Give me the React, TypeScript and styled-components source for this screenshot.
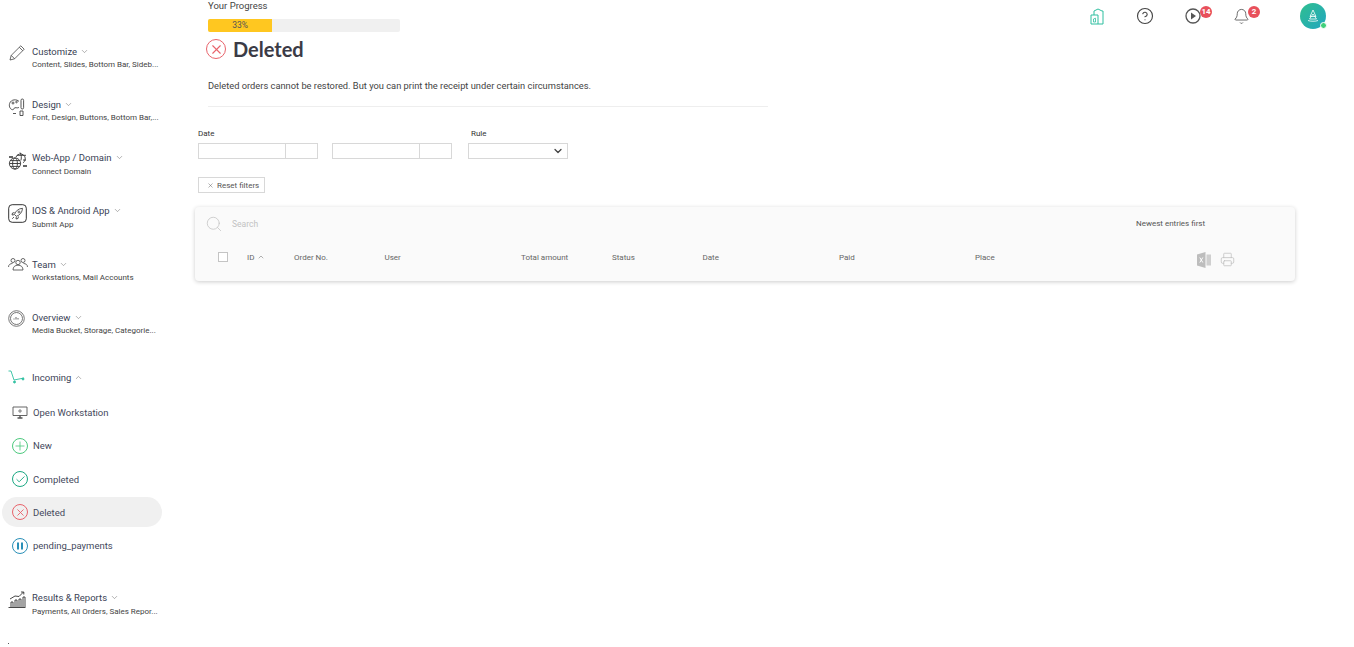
import React from 'react';
import styled, { createGlobalStyle } from 'styled-components';
import { ChevronDown, ChevronUp, Search, Printer, X, Bell, CircleHelp, Plus, Check } from 'lucide-react';

const GlobalStyle = createGlobalStyle`
    html, body {
        margin: 0;
        padding: 0;
        background: #fff;
        font-family: Roboto, "Liberation Sans", sans-serif;
        color: #333;
    }
`;

const Page = styled.div`
    display: flex;
    width: 1354px;
    height: 647px;
    overflow: hidden;
`;

const Sidebar = styled.nav`
    width: 190px;
    flex-shrink: 0;
    padding-top: 44px;
    box-sizing: border-box;
`;

const Group = styled.div<{ $height?: number }>`
    display: flex;
    align-items: flex-start;
    height: ${({ $height }) => $height ?? 53.3}px;
    padding-left: 8px;
    box-sizing: border-box;
`;

const GroupIcon = styled.div`
    width: 24px;
    height: 24px;
    flex-shrink: 0;
    color: #444;
    svg { display: block; }
`;

const GroupText = styled.div`
    min-width: 0;
`;

const GroupTitle = styled.div`
    display: flex;
    align-items: center;
    gap: 3px;
    height: 14px;
    font-size: 9.5px;
    color: #3a3f55;
    svg { color: #777; }
`;

const GroupSub = styled.div`
    font-size: 8px;
    line-height: 13px;
    color: #444;
    white-space: nowrap;
`;

const SubList = styled.div`
    display: flex;
    flex-direction: column;
    margin: 7px 0 27px 2px;
    width: 160px;
`;

const SubItem = styled.div<{ $active?: boolean }>`
    display: flex;
    align-items: center;
    height: 30px;
    margin-bottom: 3.3px;
    padding-left: 10px;
    gap: 5px;
    border-radius: 15px;
    background: ${({ $active }) => ($active ? '#f0f0f0' : 'transparent')};
    font-size: 9.5px;
    color: #44495c;
`;

const RingIcon = styled.span<{ $color: string; $size?: number }>`
    display: flex;
    align-items: center;
    justify-content: center;
    width: ${({ $size }) => $size ?? 16}px;
    height: ${({ $size }) => $size ?? 16}px;
    box-sizing: border-box;
    border: 1.7px solid ${({ $color }) => $color};
    border-radius: 50%;
    color: ${({ $color }) => $color};
    flex-shrink: 0;
`;

const Main = styled.main`
    flex: 1;
    min-width: 0;
    position: relative;
`;

const TopIcons = styled.div`
    position: absolute;
    top: 3px;
    left: 900px;
    display: flex;
    align-items: center;
    height: 26px;
`;

const TopIcon = styled.div<{ $width: number }>`
    position: relative;
    width: ${({ $width }) => $width}px;
    color: #444;
    svg { display: block; }
`;

const Badge = styled.span`
    position: absolute;
    top: -2px;
    left: 15px;
    min-width: 12px;
    height: 12px;
    padding: 0 1px;
    box-sizing: border-box;
    border-radius: 6px;
    background: #e8505b;
    color: #fff;
    font-size: 8px;
    font-weight: 700;
    line-height: 12px;
    text-align: center;
`;

const Avatar = styled.div`
    position: relative;
    width: 26px;
    height: 26px;
    border-radius: 50%;
    background: linear-gradient(135deg, #2fbf8f, #22a6c0);
    display: flex;
    align-items: center;
    justify-content: center;
`;

const OnlineDot = styled.span`
    position: absolute;
    right: -1px;
    bottom: 0;
    width: 5px;
    height: 5px;
    border-radius: 50%;
    border: 1px solid #fff;
    background: #3fd07a;
`;

const Progress = styled.div`
    padding: 0 0 0 18px;
    width: 192px;
`;

const ProgressLabel = styled.div`
    font-size: 9.5px;
    line-height: 12px;
    color: #444;
`;

const ProgressTrack = styled.div`
    height: 13px;
    margin-top: 7px;
    background: #f0f0f0;
    border-radius: 2px;
    overflow: hidden;
`;

const ProgressBar = styled.div`
    width: 33.4%;
    height: 100%;
    background: #ffc720;
    color: #555;
    font-size: 8.5px;
    line-height: 13px;
    text-align: center;
`;

const Title = styled.h1`
    display: flex;
    align-items: center;
    gap: 7px;
    margin: 2px 0 0 16px;
    height: 30px;
    font-family: Lato, sans-serif;
    font-size: 20px;
    font-weight: 700;
    color: #3b3b46;
`;

const Intro = styled.div`
    width: 560px;
    margin: 0 0 0 18px;
    padding: 15px 0 14px;
    border-bottom: 1px solid #eee;
    font-size: 9.3px;
    line-height: 13px;
    color: #444;
`;

const Filters = styled.div`
    display: flex;
    align-items: flex-end;
    margin: 21px 0 0 8px;
    gap: 14px;
`;

const Field = styled.div`
    display: flex;
    flex-direction: column;
`;

const FieldLabel = styled.label`
    height: 15px;
    padding-top: 1px;
    box-sizing: border-box;
    font-size: 8px;
    line-height: 10px;
    color: #333;
`;

const DateBox = styled.div`
    display: flex;
    width: 120px;
    height: 16px;
    box-sizing: border-box;
    border: 1px solid #d8d8d8;
`;

const DatePart = styled.div`
    width: 86px;
    border-right: 1px solid #d8d8d8;
`;

const RuleField = styled(Field)`
    margin-left: 2px;
`;

const RuleLabel = styled(FieldLabel)`
    padding-left: 3px;
`;

const Select = styled.div`
    display: flex;
    align-items: center;
    justify-content: flex-end;
    width: 100px;
    height: 16px;
    padding-right: 3px;
    box-sizing: border-box;
    border: 1px solid #d8d8d8;
    color: #444;
`;

const ResetButton = styled.button`
    display: flex;
    align-items: center;
    gap: 3px;
    width: 67px;
    height: 16px;
    margin: 18px 0 0 8px;
    padding: 0 0 0 8px;
    box-sizing: border-box;
    background: #fff;
    border: 1px solid #d8d8d8;
    font-family: inherit;
    font-size: 8px;
    color: #555;
    white-space: nowrap;
`;

const Card = styled.section`
    width: 1100px;
    height: 74px;
    margin: 14px 0 0 5px;
    background: #fafafa;
    border-radius: 4px;
    box-shadow: 0 1px 4px rgba(0, 0, 0, 0.2);
`;

const SearchRow = styled.div`
    display: flex;
    align-items: center;
    height: 33px;
    padding-left: 10px;
    font-size: 8.5px;
    color: #c2c2c2;
`;

const SearchText = styled.span`
    margin-left: 9px;
    flex: 1;
`;

const SortText = styled.span`
    width: 159px;
    color: #555;
    font-size: 8px;
`;

const HeaderRow = styled.div`
    display: grid;
    grid-template-columns: 29px 47px 90.5px 136.5px 91px 90.5px 136.5px 136px 222px 1fr;
    align-items: center;
    height: 34px;
    padding-left: 23px;
    font-size: 8px;
    color: #666;
`;

const Checkbox = styled.span`
    width: 8px;
    height: 8px;
    border: 1px solid #c4c4c4;
    background: #fff;
`;

const HeaderCell = styled.span`
    display: flex;
    align-items: center;
    gap: 3px;
`;

const ExportIcons = styled.div`
    display: flex;
    align-items: center;
    gap: 9px;
    margin-top: 5px;
    color: #bdbdbd;
`;

const ClippedMark = styled.div`
    width: 1px;
    height: 1px;
    margin: -1px 0 0 8px;
    background: #555;
`;

const ChevronD = () => <ChevronDown size={9} strokeWidth={1.5} />;

const PencilIcon = () => (
    <svg width="18" height="18" viewBox="0 0 18 18" fill="none" stroke="#444" strokeWidth="0.8">
        <path d="M2 16l1.2-4.6L12.800 1.800l3.400 3.400-9.600 9.600z" />
        <path d="M3.200 11.400l3.400 3.400M11.300 3.300l3.400 3.400" />
    </svg>
);

const PaletteIcon = () => (
    <svg width="18" height="20" viewBox="0 0 18 20" fill="none" stroke="#444" strokeWidth="0.9">
        <path d="M11 4.500C9 2 3 2 1.600 6.500c-1 3.400 1 6 3 6.200 1.500.1 1-1.800 2.400-2 1.500-.2 3 .8 4-.5" />
        <circle cx="5" cy="6" r="1" />
        <circle cx="8.500" cy="5" r="0.8" />
        <rect x="13" y="2" width="2.600" height="10" rx="1.300" />
        <path d="M5 16.500h3M12 14h3v4.500h-3z" />
    </svg>
);

const GlobeIcon = () => (
    <svg width="20" height="20" viewBox="0 0 20 20" fill="none" stroke="#333" strokeWidth="0.9">
        <circle cx="7" cy="12.500" r="5.600" />
        <ellipse cx="7" cy="12.500" rx="2.400" ry="5.600" />
        <path d="M1.400 12.500h11.200M2.200 9.600h9.600M2.200 15.400h9.600" />
        <path d="M8 6a4.800 4.800 0 1 1 7 5.800M12 1.500c1.600 1.200 1.600 7 .8 8M9 4.300h9M15 9h3" />
        <path d="M1 6h4M15 15h4" strokeWidth="1.400" />
    </svg>
);

const RocketIcon = () => (
    <svg width="19" height="19" viewBox="0 0 19 19" fill="none" stroke="#333">
        <rect x="0.700" y="0.700" width="17.600" height="17.600" rx="3.500" strokeWidth="1" />
        <path d="M6.500 10.500c1-3.500 4-6 8-6.200-.2 4-2.700 7-6.200 8z M6.500 8.500L4.500 9l-.5 2 2.200-.3M10.500 12.500l-.5 2-2 .5.3-2.200M6 13l-1.800 1.800" strokeWidth="0.800" />
        <circle cx="11" cy="8" r="1" strokeWidth="0.700" />
    </svg>
);

const TeamIcon = () => (
    <svg width="20" height="14" viewBox="0 0 20 14" fill="none" stroke="#444" strokeWidth="0.8">
        <circle cx="5" cy="3.500" r="2" />
        <circle cx="15" cy="3.500" r="2" />
        <circle cx="10" cy="5.500" r="2.200" />
        <path d="M.5 10c0-2.500 2-3.500 4-3.500M19.500 10c0-2.500-2-3.500-4-3.500M5 13c0-3.200 2-4.800 5-4.800s5 1.600 5 4.800z" />
    </svg>
);

const OverviewIcon = () => (
    <svg width="17" height="17" viewBox="0 0 17 17" fill="none" stroke="#555">
        <circle cx="8.500" cy="8.500" r="7.800" strokeWidth="0.800" />
        <circle cx="8.500" cy="8.500" r="6" strokeWidth="0.800" />
        <path d="M6 9.500v-1M8 9.500v-2.500M10 9.500v-1.500" strokeWidth="0.900" />
    </svg>
);

const CartIcon = () => (
    <svg width="18" height="14" viewBox="0 0 18 14" fill="none" stroke="#2fbfa0" strokeWidth="0.9">
        <path d="M0.500 1h2.500l3 9 10-2" />
        <circle cx="6.500" cy="12" r="1" fill="#2fbfa0" />
        <circle cx="15" cy="9" r="1" fill="#2fbfa0" />
    </svg>
);

const MonitorIcon = () => (
    <svg width="16" height="13" viewBox="0 0 16 13" fill="none" stroke="#555" strokeWidth="0.9">
        <path d="M1 1h14v8.500H1z" />
        <path d="M5.500 12h5M8 9.500V12" strokeWidth="1.400" />
        <path d="M7 4h2v2H7z" strokeWidth="0.700" />
    </svg>
);

const ChartIcon = () => (
    <svg width="18" height="18" viewBox="0 0 18 18" fill="none" stroke="#333" strokeWidth="0.9">
        <path d="M0.500 16.500h17M3 16v-5h2v5M7 16V9h2v7M11 16V8h2v8M15 16V6h2v10" />
        <path d="M2 8l5-3 4 .5L15.500 1M13 1h2.800v2.500" />
    </svg>
);

const StoreIcon = () => (
    <svg width="14" height="17" viewBox="0 0 14 17" fill="none" stroke="#2fbfa0" strokeWidth="1">
        <path d="M1 7h7v9H1zM4 7V3l4-2 4 2h1v13H8" />
        <path d="M3.500 14v-3l2-.8V14z" strokeWidth="0.800" />
    </svg>
);

const ExcelIcon = () => (
    <svg width="14" height="16" viewBox="0 0 14 16">
        <path d="M0 2.500L8.500 0v16L0 13.500z" fill="#bdbdbd" />
        <path d="M9.500 2.500H14v11H9.500z" fill="#cfcfcf" />
        <path d="M2.800 5.500l3 5M5.800 5.500l-3 5" stroke="#fff" strokeWidth="1" />
    </svg>
);

const PauseBars = () => (
    <svg width="8" height="8" viewBox="0 0 8 8" fill="currentColor">
        <rect x="1" y="0.500" width="2" height="7" />
        <rect x="5" y="0.500" width="2" height="7" />
    </svg>
);

const LogoIcon = () => (
    <svg width="12" height="14" viewBox="0 0 12 14" fill="none" stroke="#fff" strokeWidth="0.8">
        <path d="M6 1l3 6.500H3zM6 5l3.500 5h-7zM1 11.500c2 1 8 1 10 0" />
    </svg>
);

type NavGroupProps = {
    icon: React.ReactNode;
    title: string;
    sub?: string;
    open?: boolean;
    height?: number;
};

const NavGroup = ({ icon, title, sub, open, height }: NavGroupProps) => (
    <Group $height={height}>
        <GroupIcon>{icon}</GroupIcon>
        <GroupText>
            <GroupTitle>
                {title}
                {open ? <ChevronUp size={9} strokeWidth={1.5} /> : <ChevronD />}
            </GroupTitle>
            {sub && <GroupSub>{sub}</GroupSub>}
        </GroupText>
    </Group>
);

const App = () => {
    return (
        <Page>
            <GlobalStyle />
            <Sidebar>
                <NavGroup icon={<PencilIcon />} title="Customize" sub="Content, Slides, Bottom Bar, Sideb..." />
                <NavGroup icon={<PaletteIcon />} title="Design" sub="Font, Design, Buttons, Bottom Bar,..." />
                <NavGroup icon={<GlobeIcon />} title="Web-App / Domain" sub="Connect Domain" />
                <NavGroup icon={<RocketIcon />} title="IOS & Android App" sub="Submit App" />
                <NavGroup icon={<TeamIcon />} title="Team" sub="Workstations, Mail Accounts" />
                <NavGroup icon={<OverviewIcon />} title="Overview" sub="Media Bucket, Storage, Categorie..." height={60} />
                <NavGroup icon={<CartIcon />} title="Incoming" open height={20} />
                <SubList>
                    <SubItem><MonitorIcon />Open Workstation</SubItem>
                    <SubItem>
                        <RingIcon $color="#4cc97e"><Plus size={14} strokeWidth={1.4} /></RingIcon>
                        New
                    </SubItem>
                    <SubItem>
                        <RingIcon $color="#1aa882"><Check size={11} strokeWidth={2} /></RingIcon>
                        Completed
                    </SubItem>
                    <SubItem $active>
                        <RingIcon $color="#e8636b"><X size={11} strokeWidth={2} /></RingIcon>
                        Deleted
                    </SubItem>
                    <SubItem>
                        <RingIcon $color="#2a90b8"><PauseBars /></RingIcon>
                        pending_payments
                    </SubItem>
                </SubList>
                <NavGroup icon={<ChartIcon />} title="Results & Reports" sub="Payments, All Orders, Sales Repor..." />
                <ClippedMark />
            </Sidebar>
            <Main>
                <TopIcons>
                    <TopIcon $width={46}><StoreIcon /></TopIcon>
                    <TopIcon $width={49}><CircleHelp size={18} strokeWidth={1.5} /></TopIcon>
                    <TopIcon $width={48}>
                        <svg width="16" height="16" viewBox="0 0 16 16" fill="none">
                            <circle cx="8" cy="8" r="7" stroke="#555" strokeWidth="1.300" />
                            <path d="M6 4.500l5 3.500-5 3.500z" fill="#555" />
                        </svg>
                        <Badge>14</Badge>
                    </TopIcon>
                    <TopIcon $width={67}>
                        <Bell size={17} strokeWidth={1.1} />
                        <Badge>2</Badge>
                    </TopIcon>
                    <Avatar>
                        <LogoIcon />
                        <OnlineDot />
                    </Avatar>
                </TopIcons>
                <Progress>
                    <ProgressLabel>Your Progress</ProgressLabel>
                    <ProgressTrack>
                        <ProgressBar>33%</ProgressBar>
                    </ProgressTrack>
                </Progress>
                <Title>
                    <RingIcon $color="#e8636b" $size={20}>
                        <X size={15} strokeWidth={1.8} />
                    </RingIcon>
                    Deleted
                </Title>
                <Intro>Deleted orders cannot be restored. But you can print the receipt under certain circumstances.</Intro>
                <Filters>
                    <Field>
                        <FieldLabel>Date</FieldLabel>
                        <DateBox><DatePart /></DateBox>
                    </Field>
                    <DateBox><DatePart /></DateBox>
                    <RuleField>
                        <RuleLabel>Rule</RuleLabel>
                        <Select><ChevronDown size={12} strokeWidth={2.6} /></Select>
                    </RuleField>
                </Filters>
                <ResetButton><X size={7} strokeWidth={1.5} />Reset filters</ResetButton>
                <Card>
                    <SearchRow>
                        <Search size={18} strokeWidth={1} />
                        <SearchText>Search</SearchText>
                        <SortText>Newest entries first</SortText>
                    </SearchRow>
                    <HeaderRow>
                        <Checkbox />
                        <HeaderCell>ID <ChevronUp size={8} strokeWidth={1.5} /></HeaderCell>
                        <HeaderCell>Order No.</HeaderCell>
                        <HeaderCell>User</HeaderCell>
                        <HeaderCell>Total amount</HeaderCell>
                        <HeaderCell>Status</HeaderCell>
                        <HeaderCell>Date</HeaderCell>
                        <HeaderCell>Paid</HeaderCell>
                        <HeaderCell>Place</HeaderCell>
                        <ExportIcons>
                            <ExcelIcon />
                            <Printer size={15} strokeWidth={1.2} />
                        </ExportIcons>
                    </HeaderRow>
                </Card>
            </Main>
        </Page>
    );
};

export default App;
